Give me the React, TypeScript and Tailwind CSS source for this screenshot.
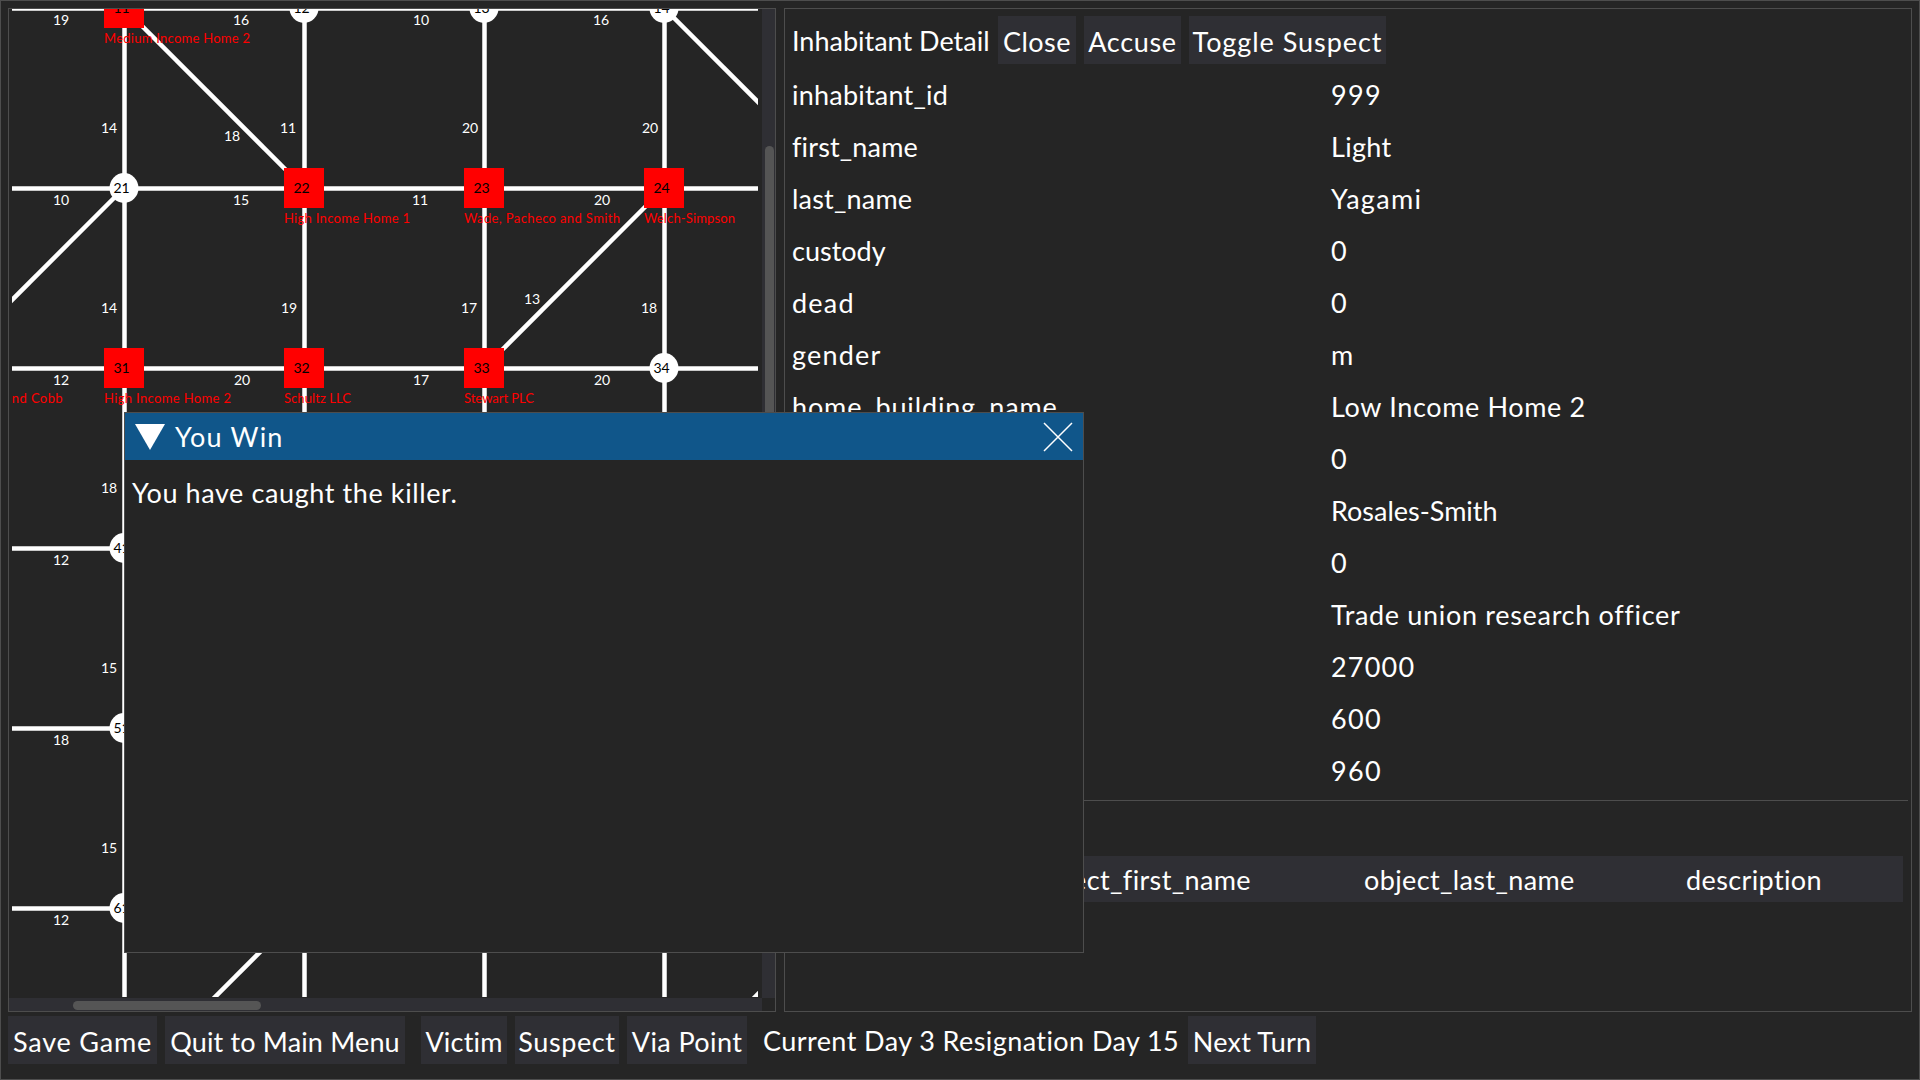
const FONT = "font-['Lato','Noto_Sans',sans-serif]";

const diagonals: [number, number, number, number][] = [
  [124, 8, 304, 188],
  [124, 188, -56, 368],
  [484, 368, 664, 188],
  [664, 8, 844, 188],
  [304, 908, 124, 1088],
  [844, 908, 664, 1088],
];
const xs = [124, 304, 484, 664];
const ys = [8, 188, 368, 548, 728, 908];

const squares: [number, number, string][] = [
  [124, 8, "11"],
  [304, 188, "22"],
  [484, 188, "23"],
  [664, 188, "24"],
  [124, 368, "31"],
  [304, 368, "32"],
  [484, 368, "33"],
];
const circles: [number, number, string][] = [
  [304, 8, "12"],
  [484, 8, "13"],
  [664, 8, "14"],
  [124, 188, "21"],
  [664, 368, "34"],
  [124, 548, "41"],
  [124, 728, "51"],
  [124, 908, "61"],
];
const edgeLabels: [number, number, string][] = [
  [61, 20, "19"], [241, 20, "16"], [421, 20, "10"], [601, 20, "16"],
  [109, 128, "14"], [288, 128, "11"], [470, 128, "20"], [650, 128, "20"], [232, 136, "18"],
  [61, 200, "10"], [241, 200, "15"], [420, 200, "11"], [602, 200, "20"],
  [109, 308, "14"], [289, 308, "19"], [469, 308, "17"], [649, 308, "18"], [532, 299, "13"],
  [61, 380, "12"], [242, 380, "20"], [421, 380, "17"], [602, 380, "20"],
  [109, 488, "18"], [61, 560, "12"], [109, 668, "15"], [61, 740, "18"], [109, 848, "15"], [61, 920, "12"],
];
const names: [number, number, string, number][] = [
  [104, 38, "Medium Income Home 2", 146],
  [284, 218, "High Income Home 1", 126],
  [464, 218, "Wade, Pacheco and Smith", 156],
  [644, 218, "Welch-Simpson", 91],
  [104, 398, "High Income Home 2", 127],
  [284, 398, "Schultz LLC", 67],
  [464, 398, "Stewart PLC", 70],
];

const rows: [string, string, string, string][] = [
  ["inhabitant_id", "tracking-[0.22px]", "999", "tracking-[1.3px]"],
  ["first_name", "tracking-[0.15px]", "Light", "tracking-[0.3px]"],
  ["last_name", "tracking-[0.2px]", "Yagami", "tracking-[1.3px]"],
  ["custody", "tracking-[0px]", "0", "tracking-[0px]"],
  ["dead", "tracking-[1.2px]", "0", "tracking-[0px]"],
  ["gender", "tracking-[1.2px]", "m", "tracking-[0px]"],
  ["home_building_name", "tracking-[0.85px]", "Low Income Home 2", "tracking-[0.65px]"],
  ["work_building_id", "tracking-[0.4px]", "0", "tracking-[0px]"],
  ["work_building_name", "tracking-[0.4px]", "Rosales-Smith", "tracking-[0px]"],
  ["killer", "tracking-[0.4px]", "0", "tracking-[0px]"],
  ["job_title", "tracking-[0.4px]", "Trade union research officer", "tracking-[0.68px]"],
  ["salary", "tracking-[0.4px]", "27000", "tracking-[1.2px]"],
  ["home_x", "tracking-[0.4px]", "600", "tracking-[1.3px]"],
  ["home_y", "tracking-[0.4px]", "960", "tracking-[1.3px]"],
];

function MapDrawing() {
  return (
    <svg width={746} height={988} viewBox="12 9 746 988" className="block" fontFamily="Lato, 'Noto Sans', sans-serif">
      {ys.map((y) => (
        <line key={y} x1={12} x2={758} y1={y + 0.5} y2={y + 0.5} stroke="#fff" strokeWidth={4.5} />
      ))}
      {xs.map((x) => (
        <line key={x} x1={x + 0.5} x2={x + 0.5} y1={0} y2={1000} stroke="#fff" strokeWidth={4.5} />
      ))}
      {diagonals.map(([a, b, c, d], i) => (
        <line key={i} x1={a} y1={b} x2={c} y2={d} stroke="#fff" strokeWidth={4.5} />
      ))}
      {edgeLabels.map(([x, y, t], i) => (
        <text key={i} x={x} y={y + 5} fontSize={14} fill="#fff" textAnchor="middle">{t}</text>
      ))}
      {squares.map(([x, y, t]) => (
        <g key={t}>
          <rect x={x - 20} y={y - 20} width={40} height={40} fill="#f00" />
          <text x={x - 2.5} y={y + 5} fontSize={14} fill="#000" textAnchor="middle">{t}</text>
        </g>
      ))}
      {circles.map(([x, y, t]) => (
        <g key={t}>
          <ellipse cx={x} cy={y} rx={14.5} ry={15} fill="#fff" />
          <text x={x - 2.5} y={y + 5} fontSize={14} fill="#000" textAnchor="middle">{t}</text>
        </g>
      ))}
      {names.map(([x, y, t, w]) => (
        <text key={t} x={x} y={y + 5} fontSize={13} fill="#f00" textLength={w} lengthAdjust="spacing">{t}</text>
      ))}
      <text x={63} y={403} fontSize={13} fill="#f00" textAnchor="end" letterSpacing={0.4}>Hall and Cobb</text>
    </svg>
  );
}

function Btn({ w, children, className = "" }: { w: string; children: string; className?: string }) {
  return (
    <button className={`h-12 shrink-0 bg-[#2f2f34] pt-[2px] text-center whitespace-nowrap text-white ${w} ${className}`}>
      {children}
    </button>
  );
}

export default function App() {
  return (
    <div className={`relative flex h-screen w-screen flex-col overflow-hidden border border-[#4d4d4d] bg-[#252525] p-[7px] text-[27px] leading-[48px] text-white ${FONT}`}>
      <div className="flex h-[1004px] gap-2">
        <div className="flex h-full w-[768px] shrink-0 flex-col border border-[#4d4d4d]">
          <div className="flex min-h-0 flex-1">
            <div className="h-[988px] w-[753px] overflow-hidden pl-[3px] pr-[4px]">
              <MapDrawing />
            </div>
            <div className="flex w-[13px] flex-col bg-[#2f2f34] pl-[3px] pr-[1px]">
              <div className="mt-[137px] h-[700px] rounded-t-[5px] bg-[#555555]" />
            </div>
          </div>
          <div className="flex h-[13px] shrink-0">
            <div className="flex w-[753px] items-start bg-[#2f2f34] pl-[64px] pt-[3px]">
              <div className="h-[9px] w-[188px] rounded-[5px] bg-[#555555]" />
            </div>
          </div>
        </div>

        <div className="min-w-0 flex-1 border border-[#4d4d4d] pl-[7px] pr-2 pt-[7px]">
          <div className="flex h-12 items-center">
            <span className="h-12 w-[206px] shrink-0 whitespace-nowrap pt-px">Inhabitant Detail</span>
            <Btn w="w-[78px]" className="tracking-[0.5px]">Close</Btn>
            <Btn w="w-[97px] ml-2" className="tracking-[0.7px]">Accuse</Btn>
            <Btn w="w-[197px] ml-2" className="tracking-[0.95px]">Toggle Suspect</Btn>
          </div>
          <div className="mt-[5px] grid grid-cols-[539px_1fr] auto-rows-[52px] items-center leading-[52px]">
            {rows.map(([k, kt, v, vt]) => (
              <div key={k} className="contents">
                <div className={`whitespace-nowrap ${kt}`}>{k}</div>
                <div className={`whitespace-nowrap ${vt}`}>{v}</div>
              </div>
            ))}
          </div>
          <div className="mt-[3px] ml-px -mr-[5px] h-px bg-[#4d4d4d]" />
          <div className="mt-[55px] ml-px grid h-[46px] grid-cols-[241px_330px_322px_1fr] items-center bg-[#2f2f34] pt-[2px] leading-[44px] tracking-[0.38px]">
            <div className="pl-1">action</div>
            <div>object_first_name</div>
            <div>object_last_name</div>
            <div>description</div>
          </div>
        </div>
      </div>

      <div className="mt-1 flex h-12 items-center">
        <Btn w="w-[149px]" className="tracking-[0.8px]">Save Game</Btn>
        <Btn w="w-[240px] ml-2" className="tracking-[0.16px]">Quit to Main Menu</Btn>
        <Btn w="w-[86px] ml-4" className="tracking-[0.2px]">Victim</Btn>
        <Btn w="w-[104px] ml-2" className="tracking-[0.6px]">Suspect</Btn>
        <Btn w="w-[120px] ml-2" className="tracking-[0.4px]">Via Point</Btn>
        <span className="ml-4 h-12 w-[425px] shrink-0 whitespace-nowrap pt-px tracking-[0.42px]">Current Day 3 Resignation Day 15</span>
        <Btn w="w-[128px]" className="tracking-[0.2px]">Next Turn</Btn>
      </div>

      <div className="absolute left-[123px] top-[411px] flex h-[541px] w-[960px] flex-col border border-[#4d4d4d] bg-[#252525]">
        <div className="flex h-[47px] shrink-0 items-center bg-[#10568a] pl-[10px] pr-[10px]">
          <svg width={30} height={26} viewBox="0 0 30 26" className="shrink-0">
            <polygon points="0,0 30,0 15,26" fill="#fff" />
          </svg>
          <span className="ml-[10px] whitespace-nowrap leading-[47px] tracking-[1.2px]">You Win</span>
          <svg width={30} height={30} viewBox="0 0 30 30" className="ml-auto shrink-0">
            <path d="M1 1 L29 29 M29 1 L1 29" stroke="#fff" strokeWidth={1.5} fill="none" />
          </svg>
        </div>
        <div className="pl-[7px] pt-[9px] leading-[48px] tracking-[0.6px]">You have caught the killer.</div>
      </div>
    </div>
  );
}
